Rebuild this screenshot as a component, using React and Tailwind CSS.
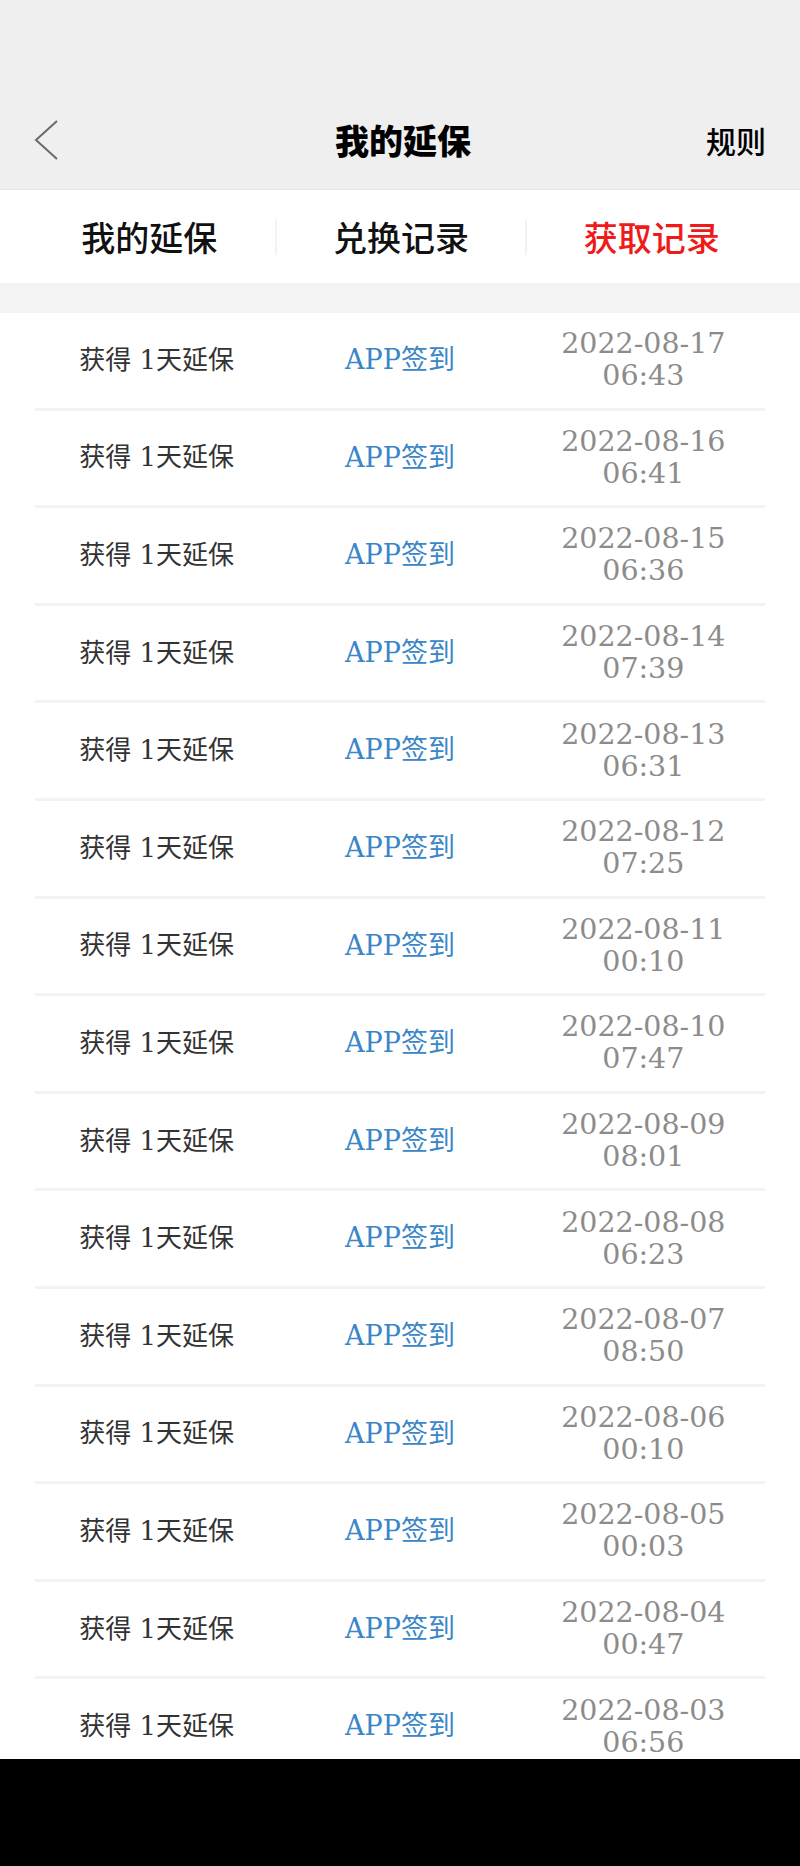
import React from 'react'

const records = [
  ['2022-08-17', '06:43'],
  ['2022-08-16', '06:41'],
  ['2022-08-15', '06:36'],
  ['2022-08-14', '07:39'],
  ['2022-08-13', '06:31'],
  ['2022-08-12', '07:25'],
  ['2022-08-11', '00:10'],
  ['2022-08-10', '07:47'],
  ['2022-08-09', '08:01'],
  ['2022-08-08', '06:23'],
  ['2022-08-07', '08:50'],
  ['2022-08-06', '00:10'],
  ['2022-08-05', '00:03'],
  ['2022-08-04', '00:47'],
  ['2022-08-03', '06:56'],
]

const tabs = ['我的延保', '兑换记录', '获取记录']

const sans = "font-['Noto_Sans_CJK_SC','Noto_Sans',sans-serif]"
const serif = "font-['DejaVu_Serif','Noto_Sans_CJK_SC',serif]"

const App = () => {
  return (
    <div className="relative w-[800px] h-[1866px] overflow-hidden bg-[#f4f4f4]">
      {/* Header */}
      <div className="h-[190px] bg-[#efefef] border-b border-[#e6e6e6] flex items-end">
        <div className="w-full h-[100px] pt-[2px] flex items-center justify-between px-[34px]">
          <svg width="26" height="42" viewBox="0 0 26 42" className="shrink-0">
            <path d="M23 2 L2 21 L23 40" fill="none" stroke="#6a6a6a" strokeWidth="2" />
          </svg>
          <h1 className={`${sans} text-[34px] font-black text-black leading-none ml-[40px]`}>我的延保</h1>
          <span className={`${sans} text-[30px] font-medium text-black leading-none`}>规则</span>
        </div>
      </div>

      {/* Tabs */}
      <div className="h-[93px] bg-white grid grid-cols-3 px-[24px] items-center">
        {tabs.map((t, i) => (
          <div
            key={t}
            className={`flex items-center justify-center h-[36px] ${i > 0 ? 'border-l-2 border-[#f3f3f3]' : ''}`}
          >
            <span className={`${sans} text-[34px] font-medium leading-none ${i === 2 ? 'text-[#ef1b1b]' : 'text-[#111]'}`}>{t}</span>
          </div>
        ))}
      </div>

      {/* Records */}
      <div className="mt-[30px] bg-white">
        {records.map(([d, t], i) => (
          <div key={i} className="mx-[35px] h-[97.6px] border-b-[3px] border-[#f3f3f3] grid grid-cols-3 items-center text-center">
            <span className={`${serif} text-[26px] text-[#333]`}>获得 1天延保</span>
            <span className={`${serif} text-[27px] text-[#3a86c8]`}>APP签到</span>
            <div className={`${serif} text-[28.5px] leading-[32px] text-[#8c8c8c]`}>
              <div>{d}</div>
              <div>{t}</div>
            </div>
          </div>
        ))}
      </div>

      {/* Bottom bar */}
      <div className="absolute left-0 right-0 top-[1759px] bottom-0 bg-black" />
    </div>
  )
}

export default App
